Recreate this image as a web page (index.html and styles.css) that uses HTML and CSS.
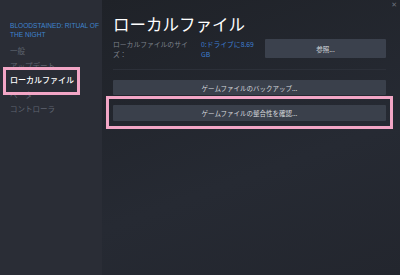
FILE: index.html
```html
<!DOCTYPE html>
<html lang="ja">
<head>
<meta charset="utf-8">
<link rel="stylesheet" href="styles.css">
</head>
<body>
<div class="window">
  <aside class="sidebar">
    <div class="game-title">BLOODSTAINED: RITUAL OF THE NIGHT</div>
    <nav class="nav">
      <div class="nav-item">一般</div>
      <div class="nav-item">アップデート</div>
      <div class="nav-item active">ローカルファイル</div>
      <div class="nav-item">ベータ</div>
      <div class="nav-item">コントローラ</div>
    </nav>
    <div class="mark mark-side"></div>
  </aside>
  <main class="main">
    <div class="close">✕</div>
    <h1 class="title">ローカルファイル</h1>
    <div class="info-row">
      <div class="label">ローカルファイルのサイズ：</div>
      <div class="value">0:ドライブに8.69 GB</div>
      <button class="btn browse">参照...</button>
    </div>
    <div class="sep"></div>
    <button class="btn wide">ゲームファイルのバックアップ...</button>
    <button class="btn wide verify">ゲームファイルの整合性を確認...</button>
    <div class="mark mark-main"></div>
  </main>
</div>
</body>
</html>
```
FILE: styles.css
```css
* { box-sizing: border-box; }
html, body { margin: 0; padding: 0; }
body {
  width: 400px;
  height: 275px;
  overflow: hidden;
  font-family: "Noto Sans CJK JP", "Liberation Sans", sans-serif;
  background: #23262e;
}
.window {
  display: flex;
  width: 400px;
  height: 275px;
  position: relative;
}
.sidebar {
  width: 102px;
  flex: none;
  background: #2a2d36;
  padding: 21px 0 0 10px;
  position: relative;
}
.game-title {
  font-family: "Liberation Sans", sans-serif;
  font-size: 6.6px;
  line-height: 9px;
  color: #3f84cf;
  width: 90px;
}
.nav {
  margin-top: 5px;
  display: flex;
  flex-direction: column;
}
.nav-item {
  font-size: 7.5px;
  line-height: 14.5px;
  color: #5f6470;
}
.nav-item.active {
  color: #ffffff;
  font-weight: 500;
  font-size: 8px;
}
.main {
  flex: 1;
  position: relative;
  padding: 12px 14px 0 11px;
  background: linear-gradient(160deg, #1f2228 0%, #262a33 60%, #23262e 100%);
  display: flex;
  flex-direction: column;
}
.close {
  position: absolute;
  top: 1px;
  right: 3px;
  font-size: 7px;
  color: #6c717c;
  font-family: "DejaVu Sans", sans-serif;
}
.title {
  margin: 0;
  font-size: 16.5px;
  font-weight: 400;
  color: #ffffff;
  line-height: 24px;
}
.info-row {
  display: flex;
  align-items: flex-start;
  margin-top: 3px;
  height: 20px;
}
.label {
  width: 80px;
  font-size: 6.8px;
  line-height: 10px;
  color: #7d828c;
}
.value {
  width: 60px;
  margin-left: 8px;
  font-size: 6.8px;
  line-height: 10px;
  color: #3e7ed0;
}
.btn {
  border: none;
  font-family: "Noto Sans CJK JP", "Liberation Sans", sans-serif;
  color: #d6d9de;
  background: #3b414d;
  font-size: 6.5px;
  padding: 0;
  border-radius: 1px;
}
.browse {
  margin-left: auto;
  width: 121px;
  height: 19px;
}
.sep {
  margin-top: 10px;
  height: 1px;
  background: #2c3039;
}
.wide {
  width: 273px;
  height: 15px;
  margin-top: 10px;
  background: #3a404b;
}
.verify {
  height: 16px;
  margin-top: 10px;
}
.mark {
  position: absolute;
  border: 3px solid #f2a6c6;
  pointer-events: none;
}
.mark-side {
  left: 3px;
  top: 67px;
  width: 77px;
  height: 28px;
}
.mark-main {
  left: 4px;
  top: 96px;
  width: 287px;
  height: 33px;
}
```
